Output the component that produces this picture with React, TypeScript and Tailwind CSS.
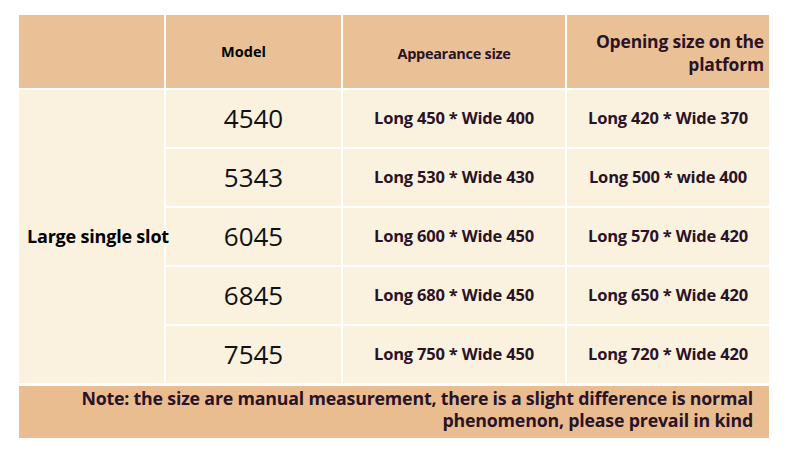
const rows = [
  { model: "4540", outer: "Long 450 * Wide 400", opening: "Long 420 * Wide 370" },
  { model: "5343", outer: "Long 530 * Wide 430", opening: "Long 500 * wide 400" },
  { model: "6045", outer: "Long 600 * Wide 450", opening: "Long 570 * Wide 420" },
  { model: "6845", outer: "Long 680 * Wide 450", opening: "Long 650 * Wide 420" },
  { model: "7545", outer: "Long 750 * Wide 450", opening: "Long 720 * Wide 420" },
];

function App() {
  return (
    <div className="w-[790px] h-[463px] bg-white pt-[15px] pl-[19px] font-['Open_Sans',sans-serif]">
      <div className="w-[750px] grid grid-cols-[145px_175px_222px_202px] grid-rows-[73px_repeat(5,57px)] gap-[2px] bg-white">
        {/* header */}
        <div className="bg-[#eac196]"></div>
        <div className="bg-[#eac196] flex items-center justify-center pr-[20px] text-[14.5px] font-bold text-black">Model</div>
        <div className="bg-[#eac196] flex items-center justify-center pt-[4px] text-[14.5px] font-bold text-[#2a1326] tracking-[-0.3px]">
          Appearance size
        </div>
        <div className="bg-[#eac196] flex items-center justify-end pr-[5px] pt-[3px] text-right text-[17.5px] leading-[23px] font-bold text-[#2a1326] tracking-[-0.2px]">
          <div>
            <div>Opening size on the</div>
            <div>platform</div>
          </div>
        </div>

        {/* body */}
        <div className="row-span-5 bg-[#faf2de] flex items-center pl-[8px] relative z-10 overflow-visible">
          <span className="whitespace-nowrap text-[18px] font-bold text-black tracking-[-0.2px]">Large single slot</span>
        </div>
        {rows.map((r) => (
          <div key={r.model} className="contents">
            <div className="bg-[#faf2de] flex items-center justify-center text-[26px] text-[#111] font-normal">
              {r.model}
            </div>
            <div className="bg-[#faf2de] flex items-center justify-center text-[16.5px] font-bold text-[#2a1326] tracking-[-0.2px]">
              {r.outer}
            </div>
            <div className="bg-[#faf2de] flex items-center justify-center text-[16.5px] font-bold text-[#2a1326] tracking-[-0.2px]">
              {r.opening}
            </div>
          </div>
        ))}
      </div>
      <div className="w-[750px] h-[52px] mt-[3px] bg-[#e9bd90] flex items-center justify-end pr-[16px] text-right text-[17.8px] leading-[22px] font-bold text-[#2a1326] tracking-[-0.2px]">
        <div className="-mt-[6px]">
          <div>Note: the size are manual measurement, there is a slight difference is normal</div>
          <div>phenomenon, please prevail in kind</div>
        </div>
      </div>
    </div>
  );
}

export default App;
